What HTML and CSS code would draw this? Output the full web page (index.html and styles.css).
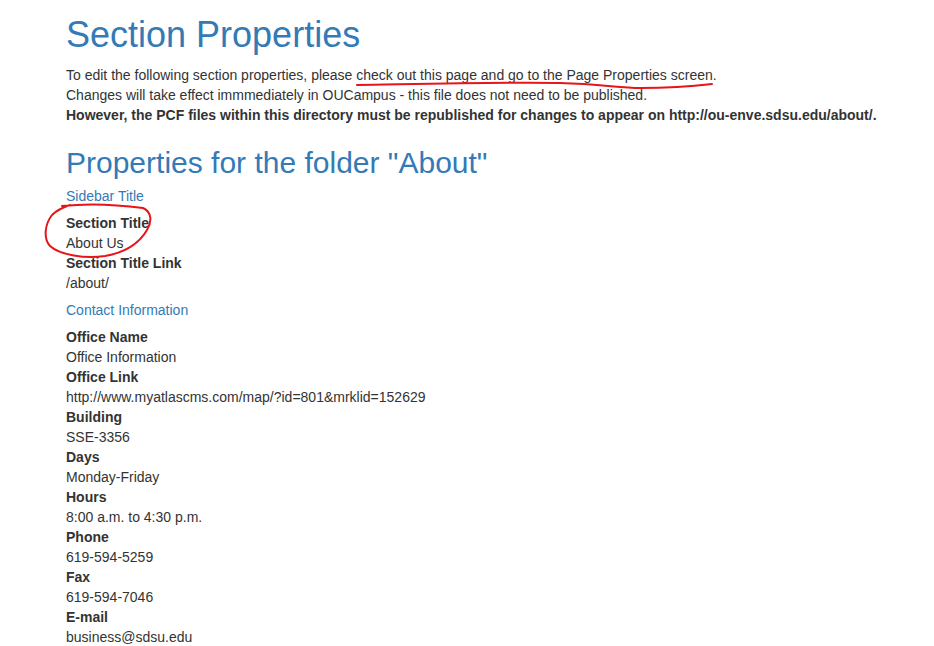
FILE: index.html
```html
<!DOCTYPE html>
<html lang="en">
<head>
<meta charset="utf-8">
<title>Section Properties</title>
<link rel="stylesheet" href="styles.css">
</head>
<body>
<div class="page">
  <h1 class="title">Section Properties</h1>
  <p class="intro">To edit the following section properties, please check out this page and go to the Page Properties screen.<br>
  Changes will take effect immmediately in OUCampus - this file does not need to be published.<br>
  <strong>However, the PCF files within this directory must be republished for changes to appear on http://ou-enve.sdsu.edu/about/.</strong></p>

  <h2 class="subtitle">Properties for the folder "About"</h2>

  <div class="group-title">Sidebar Title</div>
  <dl class="props">
    <dt>Section Title</dt>
    <dd>About Us</dd>
    <dt>Section Title Link</dt>
    <dd>/about/</dd>
  </dl>

  <div class="group-title">Contact Information</div>
  <dl class="props">
    <dt>Office Name</dt>
    <dd>Office Information</dd>
    <dt>Office Link</dt>
    <dd>http://www.myatlascms.com/map/?id=801&amp;mrklid=152629</dd>
    <dt>Building</dt>
    <dd>SSE-3356</dd>
    <dt>Days</dt>
    <dd>Monday-Friday</dd>
    <dt>Hours</dt>
    <dd>8:00 a.m. to 4:30 p.m.</dd>
    <dt>Phone</dt>
    <dd>619-594-5259</dd>
    <dt>Fax</dt>
    <dd>619-594-7046</dd>
    <dt>E-mail</dt>
    <dd>business@sdsu.edu</dd>
  </dl>
</div>

<svg class="annotations" width="934" height="646" viewBox="0 0 934 646" xmlns="http://www.w3.org/2000/svg">
  <path d="M357 85 C 420 84, 500 82, 560 83 C 600 84, 620 88, 640 88 C 670 88, 695 86, 712 84" fill="none" stroke="#e8141b" stroke-width="2" stroke-linecap="round"/>
  <path d="M62 206 C 90 203, 120 205, 143 208 C 152 212, 152 222, 147 230 C 140 242, 128 252, 105 256 C 85 259, 60 255, 50 246 C 43 238, 45 224, 52 215 C 58 209, 64 207, 70 205" fill="none" stroke="#e8141b" stroke-width="2" stroke-linecap="round"/>
</svg>
</body>
</html>
```

FILE: styles.css
```css
html, body {
  margin: 0;
  padding: 0;
  background: #fff;
}

body {
  position: relative;
  width: 934px;
  height: 646px;
  overflow: hidden;
  font-family: "Liberation Sans", Arial, Helvetica, sans-serif;
  font-size: 14px;
  line-height: 20px;
  color: #333;
}

.page {
  padding: 15px 0 0 66px;
}

.title {
  margin: 0 0 10px;
  font-size: 36px;
  font-weight: 400;
  line-height: 1.1;
  color: #337ab7;
}

.intro {
  margin: 0;
}

.intro strong {
  font-weight: 700;
}

.subtitle {
  margin: 21px 0 7px;
  font-size: 30px;
  font-weight: 400;
  line-height: 33px;
  color: #337ab7;
}

.group-title {
  margin: 0 0 7px;
  color: #337ab7;
}

.props {
  margin: 0 0 7px;
}

.props dt {
  font-weight: 700;
}

.props dd {
  margin: 0;
}

.annotations {
  position: absolute;
  top: 0;
  left: 0;
  pointer-events: none;
}
```
